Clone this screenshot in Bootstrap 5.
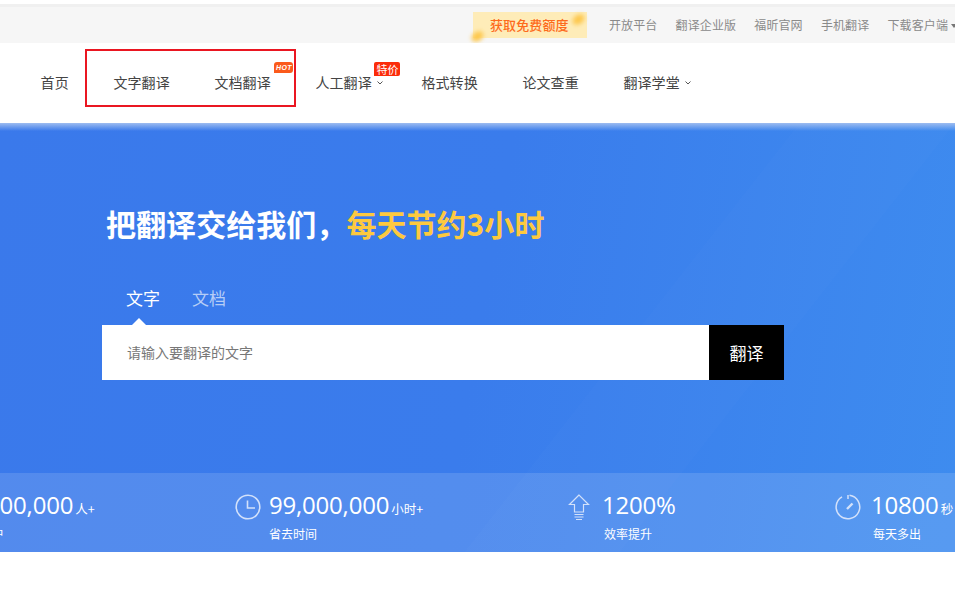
<!DOCTYPE html>
<html lang="zh-CN">
<head>
<meta charset="utf-8">
<title>翻译</title>
<link href="https://cdn.jsdelivr.net/npm/bootstrap@5.3.0/dist/css/bootstrap.min.css" rel="stylesheet">
<style>
html,body{height:100%;overflow:hidden;background:#fff}
body{font-family:"Noto Sans CJK SC","Liberation Sans",sans-serif;color:#333;width:955px;position:relative}
.topbar{height:43px;background:#f6f6f6;border-top:4px solid #fff;box-shadow:inset 0 3px 0 #f0f0f0;padding-left:473px;white-space:nowrap;overflow:hidden}
.promo{position:relative;width:114px;height:26px;margin-top:8px;background:#feecb8;color:#fd6b1c;font-size:13px;font-weight:500;line-height:25px;padding-left:17px;margin-right:22px;flex:none;letter-spacing:.1px}
.spark{position:absolute;width:13px;height:9px;border-radius:50%;background:#fdc84e;filter:blur(2px);transform:rotate(-35deg)}
.spark-a{left:-2px;top:20px}
.spark-b{left:99px;top:3px}
.toplink{font-size:12px;color:#8a8a8a;line-height:18px;margin-top:12px;margin-right:18.2px;flex:none;letter-spacing:.1px}
.caret-s{display:inline-block;border:3px solid transparent;border-top:4px solid #777;border-bottom:0;margin-left:3px;vertical-align:2px}
.mainnav{height:80px;background:#fff;padding-left:40.6px;white-space:nowrap}
.navitem{font-size:14px;letter-spacing:.1px;color:#444;line-height:20px;position:relative;margin-right:44.6px;margin-top:29px;flex:none}
.navitem-more{margin-right:49.6px}
.chev{position:absolute;left:62px;top:9px}
.tag-hot{position:absolute;left:60px;top:-10px;width:19px;height:11px;background:#fb5a1b;color:#fff;font:italic 700 7px/11px "Liberation Sans",sans-serif;text-align:center;border-radius:3px 3px 3px 0;letter-spacing:.3px}
.tag-sale{position:absolute;left:59px;top:-10px;width:26px;height:14px;background:#fb2c0a;color:#fff;font-size:11px;line-height:14px;letter-spacing:0;text-align:center;border-radius:2px 2px 2px 0}
.annot{position:absolute;left:85px;top:49px;width:211px;height:58px;border:2px solid #ea1621;pointer-events:none}
.hero{height:429px;position:relative;overflow:hidden;background:linear-gradient(128deg,rgba(255,255,255,0) 62%,rgba(255,255,255,.01) 62%,rgba(255,255,255,.01) 74%,rgba(255,255,255,0) 74%),linear-gradient(100deg,#3a79eb 0%,#3a7cec 50%,#3e8cef 100%)}
.hero-sheen{position:absolute;left:0;right:0;top:0;height:8px;background:linear-gradient(#9dbcf0,rgba(157,188,240,0))}
.hero-title{font-size:30px;font-weight:700;color:#fff;line-height:40px;margin:80px 0 0 106px;letter-spacing:.05px}
.hero-title span{color:#fdc93f}
.tabs-row{margin:40px 0 0 126px;height:29px}
.tabitem{font-size:17px;line-height:29px;color:#b6cdf6;margin-right:32px}
.tabitem.on{color:#fff;position:relative}
.tabitem.on::after{content:"";position:absolute;left:6px;top:35px;border:7px solid transparent;border-top:0;border-bottom-color:#fff}
.searchbox{width:682px;height:55px;margin:13px 0 0 102px;background:#fff}
.searchtext{flex:1;padding-left:25px;line-height:55px;font-size:14px;color:#777}
.gobtn{width:75px;height:55px;background:#000;color:#fff;font-size:17px;line-height:55px;text-align:center;border:0;border-radius:0;padding:0}
.statbar{position:absolute;left:0;right:0;bottom:0;height:79px;background:rgba(255,255,255,.13);white-space:nowrap;overflow:hidden}
.statitem{position:absolute;top:0;color:#fff}
.stat-a{left:-81px}.stat-b{left:235px}.stat-c{left:568px}.stat-d{left:835px}
.staticon{position:absolute;left:0;top:21px}
.statnum{position:absolute;top:14px;font:400 24px/36px "Open Sans","Noto Sans",sans-serif;letter-spacing:-.2px}
.statnum small{font:400 12.5px/1 "Noto Sans CJK SC",sans-serif;margin-left:2px;letter-spacing:0}
.statlabel{position:absolute;top:52px;font-size:12px;line-height:18px}
</style>
</head>
<body>
<div class="topbar d-flex">
  <div class="promo">获取免费额度<i class="spark spark-a"></i><i class="spark spark-b"></i></div>
  <a class="toplink text-decoration-none" href="#">开放平台</a>
  <a class="toplink text-decoration-none" href="#">翻译企业版</a>
  <a class="toplink text-decoration-none" href="#">福昕官网</a>
  <a class="toplink text-decoration-none" href="#">手机翻译</a>
  <a class="toplink text-decoration-none" href="#">下载客户端<span class="caret-s"></span></a>
</div>
<nav class="mainnav d-flex">
  <a class="navitem text-decoration-none" href="#">首页</a>
  <a class="navitem text-decoration-none" href="#">文字翻译</a>
  <a class="navitem text-decoration-none" href="#">文档翻译<span class="tag-hot">HOT</span></a>
  <a class="navitem navitem-more text-decoration-none" href="#">人工翻译<span class="tag-sale">特价</span><svg class="chev" width="6" height="4" viewBox="0 0 6 4"><path d="M.5.5 3 3 5.5.5" fill="none" stroke="#555"/></svg></a>
  <a class="navitem text-decoration-none" href="#">格式转换</a>
  <a class="navitem text-decoration-none" href="#">论文查重</a>
  <a class="navitem text-decoration-none" href="#">翻译学堂<svg class="chev" width="6" height="4" viewBox="0 0 6 4"><path d="M.5.5 3 3 5.5.5" fill="none" stroke="#555"/></svg></a>
</nav>
<div class="annot"></div>
<section class="hero">
  <div class="hero-sheen"></div>
  <h1 class="hero-title">把翻译交给我们，<span>每天节约3小时</span></h1>
  <div class="tabs-row d-flex">
    <div class="tabitem on">文字</div>
    <div class="tabitem">文档</div>
  </div>
  <div class="searchbox d-flex">
    <div class="searchtext">请输入要翻译的文字</div>
    <button class="btn gobtn" type="button">翻译</button>
  </div>
  <div class="statbar">
    <div class="statitem stat-a">
      <div class="statnum" style="left:34px">99,000,000<small>人+</small></div>
      <div class="statlabel" style="left:37px">服务用户</div>
    </div>
    <div class="statitem stat-b">
      <svg class="staticon" width="26" height="26" viewBox="0 0 26 26" fill="none" stroke="#d3e1fa" stroke-width="1.6"><circle cx="13" cy="13" r="11.8"/><path d="M12.5 6.5V14H20"/></svg>
      <div class="statnum" style="left:34px">99,000,000<small>小时+</small></div>
      <div class="statlabel" style="left:34px">省去时间</div>
    </div>
    <div class="statitem stat-c">
      <svg class="staticon" width="22" height="27" viewBox="0 0 22 27" fill="none" stroke="#d3e1fa" stroke-width="1.2"><path d="M11 1 1.5 10.5H6.5V18H15.5V10.5H20.5Z"/><path d="M6.5 20.5H15.5M6.5 23H15.5M8 25.5H14"/></svg>
      <div class="statnum" style="left:34px">1200%</div>
      <div class="statlabel" style="left:36px">效率提升</div>
    </div>
    <div class="statitem stat-d">
      <svg class="staticon" width="26" height="26" viewBox="0 0 26 26" fill="none" stroke="#d3e1fa" stroke-width="1.5"><path d="M14.5 1.3A11.8 11.8 0 1 1 7 2.8"/><path d="M13 1v4"/><path d="M12 15 17.5 9.5" stroke-width="2.4"/></svg>
      <div class="statnum" style="left:36px">10800<small>秒</small></div>
      <div class="statlabel" style="left:38px">每天多出</div>
    </div>
  </div>
</section>
</body>
</html>
